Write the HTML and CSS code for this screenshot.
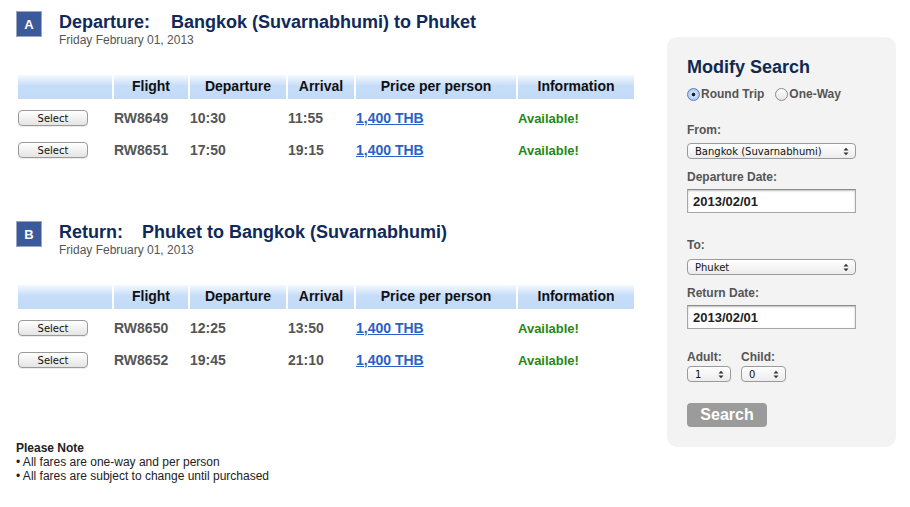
FILE: index.html
```html
<!DOCTYPE html>
<html>
<head>
<meta charset="utf-8">
<link rel="stylesheet" href="styles.css">
</head>
<body>
<div class="page">
  <div class="main">
    <section class="leg">
      <div class="leg-head">
        <div class="badge">A</div>
        <div class="leg-titles">
          <h1 class="leg-title"><span class="leg-kind">Departure:</span>Bangkok (Suvarnabhumi) to Phuket</h1>
          <div class="leg-date">Friday February 01, 2013</div>
        </div>
      </div>
      <div class="grid">
        <div class="th"></div><div class="th">Flight</div><div class="th">Departure</div><div class="th">Arrival</div><div class="th">Price per person</div><div class="th">Information</div>
        <div class="td"><span class="sel-btn">Select</span></div><div class="td">RW8649</div><div class="td">10:30</div><div class="td">11:55</div><div class="td"><a class="price" href="#">1,400 THB</a></div><div class="td avail">Available!</div>
        <div class="td"><span class="sel-btn">Select</span></div><div class="td">RW8651</div><div class="td">17:50</div><div class="td">19:15</div><div class="td"><a class="price" href="#">1,400 THB</a></div><div class="td avail">Available!</div>
      </div>
    </section>
    <section class="leg leg-b">
      <div class="leg-head">
        <div class="badge">B</div>
        <div class="leg-titles">
          <h1 class="leg-title"><span class="leg-kind leg-kind-b">Return:</span>Phuket to Bangkok (Suvarnabhumi)</h1>
          <div class="leg-date">Friday February 01, 2013</div>
        </div>
      </div>
      <div class="grid">
        <div class="th"></div><div class="th">Flight</div><div class="th">Departure</div><div class="th">Arrival</div><div class="th">Price per person</div><div class="th">Information</div>
        <div class="td"><span class="sel-btn">Select</span></div><div class="td">RW8650</div><div class="td">12:25</div><div class="td">13:50</div><div class="td"><a class="price" href="#">1,400 THB</a></div><div class="td avail">Available!</div>
        <div class="td"><span class="sel-btn">Select</span></div><div class="td">RW8652</div><div class="td">19:45</div><div class="td">21:10</div><div class="td"><a class="price" href="#">1,400 THB</a></div><div class="td avail">Available!</div>
      </div>
    </section>
    <div class="note">
      <div class="note-title">Please Note</div>
      <div>• All fares are one-way and per person</div>
      <div>• All fares are subject to change until purchased</div>
    </div>
  </div>
  <aside class="panel">
    <h2 class="panel-title">Modify Search</h2>
    <div class="radios">
      <span class="radio on"></span><span class="radio-label">Round Trip</span>
      <span class="radio"></span><span class="radio-label">One-Way</span>
    </div>
    <div class="lbl lbl-from">From:</div>
    <div class="fsel wide sel-from"><span>Bangkok (Suvarnabhumi)</span><svg width="6" height="9" viewBox="0 0 6 9"><path d="M0.5 3.5 L3 0.8 L5.5 3.5 Z M0.5 5.5 L3 8.2 L5.5 5.5 Z" fill="#333"/></svg></div>
    <div class="lbl lbl-date">Departure Date:</div>
    <div class="finput">2013/02/01</div>
    <div class="lbl lbl-to">To:</div>
    <div class="fsel wide sel-to"><span>Phuket</span><svg width="6" height="9" viewBox="0 0 6 9"><path d="M0.5 3.5 L3 0.8 L5.5 3.5 Z M0.5 5.5 L3 8.2 L5.5 5.5 Z" fill="#333"/></svg></div>
    <div class="lbl lbl-date">Return Date:</div>
    <div class="finput">2013/02/01</div>
    <div class="pax">
      <div class="pax-col">
        <div class="lbl lbl-pax">Adult:</div>
        <div class="fsel small adult"><span>1</span><svg width="6" height="9" viewBox="0 0 6 9"><path d="M0.5 3.5 L3 0.8 L5.5 3.5 Z M0.5 5.5 L3 8.2 L5.5 5.5 Z" fill="#333"/></svg></div>
      </div>
      <div class="pax-col">
        <div class="lbl lbl-pax">Child:</div>
        <div class="fsel small child"><span>0</span><svg width="6" height="9" viewBox="0 0 6 9"><path d="M0.5 3.5 L3 0.8 L5.5 3.5 Z M0.5 5.5 L3 8.2 L5.5 5.5 Z" fill="#333"/></svg></div>
      </div>
    </div>
    <div class="search-btn">Search</div>
  </aside>
</div>
</body>
</html>
```
FILE: styles.css
```css
* { box-sizing: border-box; }
html, body { margin: 0; padding: 0; background: #fff; }
body { font-family: "Liberation Sans", Arial, sans-serif; color: #333; }

.page { display: flex; align-items: flex-start; }
.main { width: 667px; padding: 11px 0 0 16px; }

.leg-head { display: flex; align-items: flex-start; }
.badge {
  width: 26px; height: 26px; background: #3a5a9b; border: 1px solid #9aa6bb;
  color: #fff; font-size: 13px; font-weight: bold; display: flex;
  align-items: center; justify-content: center; margin-right: 17px;
}
.leg-title { margin: 0; font-size: 18px; line-height: 22px; font-weight: bold; color: #0f2a5a; }
.leg-kind { margin-right: 21px; }
.leg-kind-b { margin-right: 19px; }
.leg-date { font-size: 12px; line-height: 14px; color: #555; }

.grid {
  display: grid;
  grid-template-columns: 94px 74px 96px 66px 160px 116px;
  grid-template-rows: auto 32px 32px;
  column-gap: 2px;
  margin: 28px 0 0 2px;
}
.th {
  height: 24px; margin-bottom: 3px;
  background: linear-gradient(#f4f9ff 0%, #c6ddf9 45%, #c4dbf8 100%);
  font-size: 14px; font-weight: bold; color: #111; text-align: center;
  line-height: 23px;
}
.td {
  font-size: 14px; font-weight: bold; color: #555; display: flex; align-items: center;
}
.sel-btn {
  width: 70px; height: 16px; border: 1px solid #9a9a9a; border-radius: 4px;
  background: linear-gradient(#ffffff, #e4e4e4);
  font-family: "DejaVu Sans", sans-serif; font-size: 10px; font-weight: normal; color: #111;
  display: flex; align-items: center; justify-content: center;
  box-shadow: 0 1px 0 rgba(0,0,0,0.08);
}
.price { color: #2d5fc4; text-decoration: underline; }
.avail { color: #1f8a12; font-size: 13px; }

.leg-b { margin-top: 55px; }

.note { margin-top: 65px; font-size: 12px; line-height: 14px; color: #222; }
.note-title { font-weight: bold; }

.panel {
  width: 229px; margin-top: 37px; background: #f3f3f3; border-radius: 10px;
  padding: 19px 20px 20px 20px;
}
.panel-title { margin: 0; font-size: 18px; line-height: 22px; font-weight: bold; color: #0f2a4f; }
.radios { display: flex; align-items: center; height: 16px; margin-top: 8px; }
.radio {
  width: 13px; height: 13px; border-radius: 50%; border: 1px solid #8a8a8a;
  background: linear-gradient(#fdfdfd, #e6e6e6); flex: none;
}
.radio.on { border-color: #5a7fb5; background: radial-gradient(circle, #222 0 1.6px, #cfe2fa 2.2px, #8fb6ec 100%); }
.radio-label { font-size: 12px; font-weight: bold; color: #555; margin-left: 1px; margin-right: 11px; }

.lbl { font-size: 12px; line-height: 14px; font-weight: bold; color: #555; }
.lbl-from { margin-top: 21px; }
.lbl-to { margin-top: 25px; }
.lbl-date { margin-top: 11px; }

.fsel {
  height: 16px; border: 1px solid #9a9a9a; border-radius: 4px;
  background: linear-gradient(#ffffff, #ececec);
  font-family: "DejaVu Sans", sans-serif; font-size: 10px; color: #111;
  display: flex; align-items: center; justify-content: space-between;
  padding: 0 6px 0 7px;
}
.fsel.wide { width: 169px; }
.sel-from { margin-top: 6px; }
.sel-to { margin-top: 7px; }
.fsel.small { margin-top: 3px; }
.adult { width: 44px; }
.child { width: 45px; }

.finput {
  margin-top: 5px; width: 169px; height: 24px; background: #fff;
  border: 1px solid #a8a8a8; border-top-color: #8a8a8a;
  box-shadow: inset 0 1px 2px rgba(0,0,0,0.25);
  font-size: 13px; font-weight: bold; color: #222; padding-left: 5px;
  display: flex; align-items: center;
}

.pax { display: flex; gap: 10px; margin-top: 22px; }
.lbl-pax { line-height: 12px; }

.search-btn {
  margin-top: 21px; width: 80px; height: 24px; border-radius: 4px; background: #9b9b9b;
  color: #fff; font-size: 16px; font-weight: bold; display: flex;
  align-items: center; justify-content: center;
}
```
